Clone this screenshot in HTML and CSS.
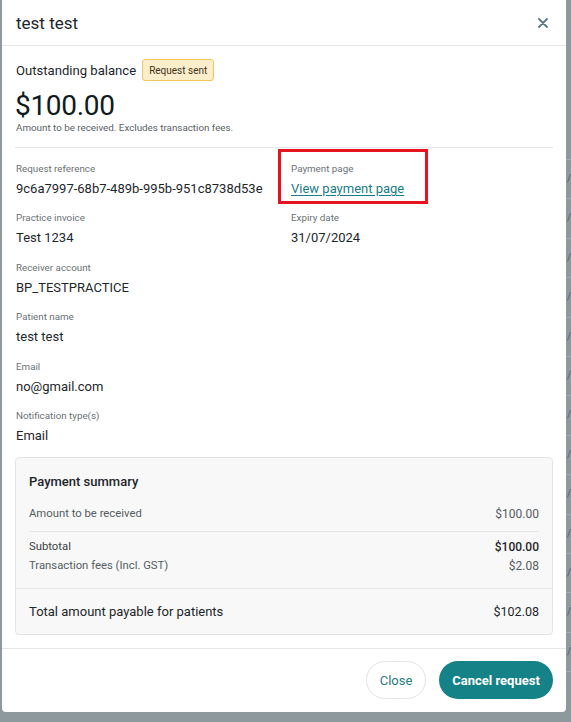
FILE: index.html
```html
<!DOCTYPE html>
<html lang="en">
<head>
<meta charset="utf-8">
<title>test test</title>
<link rel="stylesheet" href="styles.css">
</head>
<body>
  <div class="modal">
    <header class="modal-header">
      <h1 class="modal-title">test test</h1>
      <button class="icon-close" aria-label="Close">
        <svg width="10" height="10" viewBox="0 0 10 10"><path d="M1 1L9 9M9 1L1 9" stroke="#5c7980" stroke-width="1.8" stroke-linecap="round"/></svg>
      </button>
    </header>

    <div class="modal-body">
      <div class="balance-row">
        <span class="balance-label">Outstanding balance</span>
        <span class="badge">Request sent</span>
      </div>
      <div class="amount">$100.00</div>
      <div class="amount-note">Amount to be received. Excludes transaction fees.</div>
      <hr class="divider">

      <div class="details">
        <div class="field">
          <div class="label">Request reference</div>
          <div class="value">9c6a7997-68b7-489b-995b-951c8738d53e</div>
        </div>
        <div class="field highlight">
          <div class="label">Payment page</div>
          <div class="value"><a class="link" href="#">View payment page</a></div>
          <span class="annotation"></span>
        </div>
        <div class="field">
          <div class="label">Practice invoice</div>
          <div class="value">Test 1234</div>
        </div>
        <div class="field">
          <div class="label">Expiry date</div>
          <div class="value">31/07/2024</div>
        </div>
        <div class="field">
          <div class="label">Receiver account</div>
          <div class="value">BP_TESTPRACTICE</div>
        </div>
        <div class="field empty"></div>
        <div class="field">
          <div class="label">Patient name</div>
          <div class="value">test test</div>
        </div>
        <div class="field empty"></div>
        <div class="field">
          <div class="label">Email</div>
          <div class="value">no@gmail.com</div>
        </div>
        <div class="field empty"></div>
        <div class="field">
          <div class="label">Notification type(s)</div>
          <div class="value">Email</div>
        </div>
      </div>

      <section class="summary">
        <div class="summary-main">
          <h2 class="summary-title">Payment summary</h2>
          <div class="sum-row">
            <span>Amount to be received</span><span class="num">$100.00</span>
          </div>
          <hr class="sum-divider">
          <div class="sum-row strong-val">
            <span>Subtotal</span><span class="num">$100.00</span>
          </div>
          <div class="sum-row tight">
            <span>Transaction fees (Incl. GST)</span><span class="num">$2.08</span>
          </div>
        </div>
        <div class="summary-total">
          <span>Total amount payable for patients</span><span class="num">$102.08</span>
        </div>
      </section>
    </div>

    <footer class="modal-footer">
      <button class="btn btn-secondary">Close</button>
      <button class="btn btn-primary">Cancel request</button>
    </footer>
  </div>

  <div class="backdrop-strip">
    <div class="strip-head"></div>
    <div class="strip-row">/</div>
    <div class="strip-row">/</div>
    <div class="strip-row">/</div>
    <div class="strip-row">/</div>
    <div class="strip-row">/</div>
    <div class="strip-row">/</div>
    <div class="strip-row">/</div>
    <div class="strip-row">/</div>
    <div class="strip-row">/</div>
    <div class="strip-row">/</div>
    <div class="strip-row">/</div>
    <div class="strip-row">/</div>
    <div class="strip-row">/</div>
  </div>
</body>
</html>
```

FILE: styles.css
```css
* { box-sizing: border-box; }

html, body {
  margin: 0;
  padding: 0;
}

body {
  width: 571px;
  height: 722px;
  overflow: hidden;
  background: #8e999d;
  display: flex;
  align-items: flex-start;
  font-family: Roboto, "Noto Sans", Arial, sans-serif;
  color: #1d262b;
}

.modal {
  margin-left: 2px;
  width: 564px;
  height: 712px;
  background: #fff;
  border-radius: 0 0 4px 4px;
  display: flex;
  flex-direction: column;
  flex: none;
}

.modal-header {
  height: 46px;
  border-bottom: 1px solid #e3e5e6;
  display: flex;
  align-items: center;
  justify-content: space-between;
  padding: 1px 14px 0 14px;
}

.modal-title {
  margin: 0;
  font-size: 17px;
  font-weight: 400;
  color: #1d262b;
}

.icon-close {
  border: 0;
  background: none;
  padding: 0;
  width: 10px;
  height: 10px;
  display: flex;
  margin-right: 4px;
}

.modal-body {
  flex: 1;
  padding: 13px 13px 0 13px;
}

.balance-row {
  display: flex;
  align-items: center;
  gap: 6px;
  height: 22px;
}

.balance-label {
  font-size: 13.1px;
  color: #1d262b;
  padding-left: 1px;
}

.badge {
  height: 22px;
  padding: 0 6px;
  display: inline-flex;
  align-items: center;
  background: #fdeecb;
  border: 1px solid #f6c361;
  border-radius: 3px;
  font-size: 10px;
  color: #3b3220;
}

.amount {
  margin-top: 9px;
  font-size: 28px;
  line-height: 32px;
  color: #111a20;
  letter-spacing: -0.3px;
}

.amount-note {
  font-size: 9.8px;
  line-height: 12px;
  color: #5a6266;
  padding-left: 1px;
}

.divider {
  border: 0;
  border-top: 1px solid #e4e6e7;
  margin: 13px 0 0 0;
}

.details {
  display: grid;
  grid-template-columns: 275px 1fr;
  row-gap: 13.4px;
  margin-top: 14px;
  padding-left: 1px;
}

.field {
  position: relative;
}

.label {
  font-size: 9.8px;
  line-height: 14px;
  color: #6b7276;
}

.value {
  margin-top: 4px;
  font-size: 13px;
  line-height: 18px;
  color: #1d262b;
}

.link {
  color: #1a7c86;
  text-decoration: underline;
  text-underline-offset: 2px;
}

.annotation {
  position: absolute;
  left: -13px;
  top: -13px;
  width: 150px;
  height: 55px;
  border: 3px solid #e5141f;
  pointer-events: none;
}

.summary {
  margin-top: 12px;
  background: #f8f8f8;
  border: 1px solid #e3e5e6;
  border-radius: 4px;
}

.summary-main {
  padding: 15px 13px 14px 13px;
}

.summary-title {
  margin: 0;
  font-size: 13px;
  line-height: 18px;
  font-weight: 500;
  color: #1d262b;
}

.sum-row {
  display: flex;
  justify-content: space-between;
  font-size: 11.3px;
  line-height: 16px;
  color: #555d61;
  margin-top: 15px;
}

.sum-row .num {
  font-size: 12px;
}

.sum-row.strong-val {
  margin-top: 7px;
}

.sum-row.strong-val .num {
  font-weight: 500;
  color: #1d262b;
}

.sum-row.strong-val span:first-child {
  color: #3a4246;
}

.sum-row.tight {
  margin-top: 3px;
}

.sum-divider {
  border: 0;
  border-top: 1px solid #e1e3e4;
  margin: 9px 0 0 0;
}

.summary-total {
  border-top: 1px solid #e3e5e6;
  padding: 14px 13px 13px 13px;
  display: flex;
  justify-content: space-between;
  align-items: center;
  font-size: 13px;
  line-height: 18px;
  color: #1d262b;
}

.summary-total .num {
  font-size: 12.5px;
  color: #1d262b;
}

.modal-footer {
  border-top: 1px solid #e3e5e6;
  padding: 12px 13px 13px 13px;
  display: flex;
  justify-content: flex-end;
  gap: 13px;
}

.btn {
  height: 38px;
  border-radius: 19px;
  font-family: Roboto, "Noto Sans", Arial, sans-serif;
  font-size: 13px;
  padding: 0;
  cursor: pointer;
}

.btn-secondary {
  width: 60px;
  background: #fff;
  border: 1px solid #e2e4e5;
  color: #2a7a80;
}

.btn-primary {
  width: 114px;
  background: #148287;
  border: 0;
  color: #fff;
  font-weight: 700;
}

.backdrop-strip {
  flex: 1;
  height: 722px;
  overflow: hidden;
  display: flex;
  flex-direction: column;
}

.strip-head {
  height: 160px;
  flex: none;
  border-bottom: 1px solid #a3acaf;
}

.strip-row {
  height: 39.4px;
  flex: none;
  border-bottom: 1px solid #a3acaf;
  font-size: 10px;
  line-height: 38px;
  color: #4f5d62;
  white-space: nowrap;
  padding-left: 1px;
}
```
